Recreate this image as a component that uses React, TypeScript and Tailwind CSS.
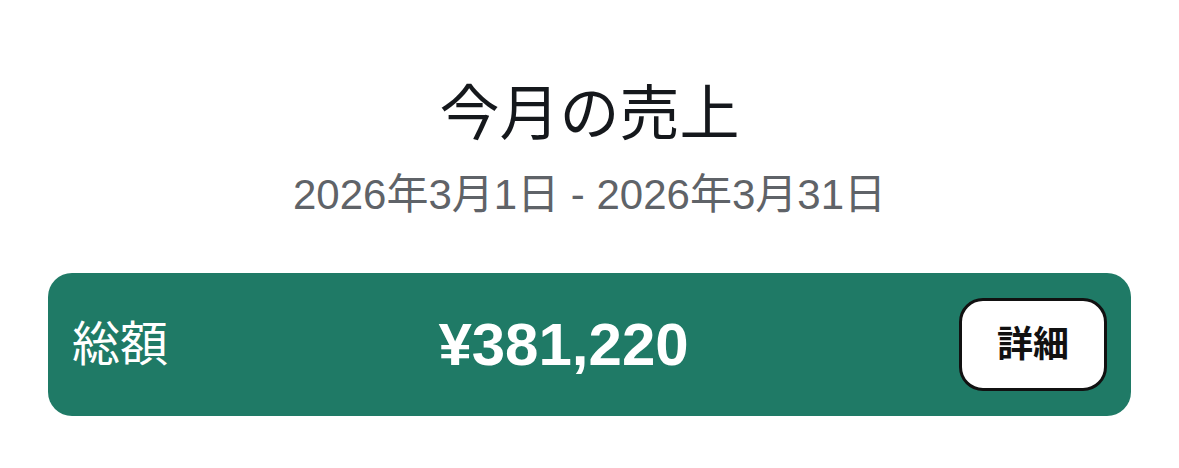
export default function App() {
  return (
    <div
      className="w-[1179px] h-[468px] bg-white"
      style={{ fontFamily: '"Liberation Sans", "Noto Sans CJK JP", sans-serif' }}
    >
      <div className="pt-[79px] flex flex-col items-center">
        <h1 className="text-[60px] leading-[72px] font-normal text-[#15181c]">今月の売上</h1>
        <p className="mt-[19px] text-[42px] leading-[50px] text-[#5f6368]">
          2026年3月1日 - 2026年3月31日
        </p>
      </div>
      <div className="mx-[48px] mt-[53px] h-[143px] rounded-[24px] bg-[#1f7a66] px-[24px] flex items-center">
        <span className="text-[48px] leading-none text-white">総額</span>
        <span className="flex-1 text-center text-[60px] leading-none font-bold text-white">¥381,220</span>
        <button className="w-[148px] h-[93px] rounded-[24px] border-[3px] border-[#111] bg-white flex items-center justify-center text-[36px] font-bold text-[#111]">
          詳細
        </button>
      </div>
    </div>
  );
}
